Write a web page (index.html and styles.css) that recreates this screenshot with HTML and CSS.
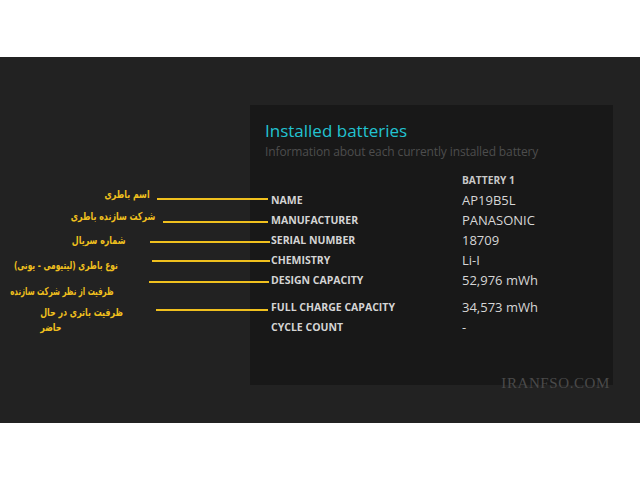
FILE: index.html
```html
<!DOCTYPE html>
<html lang="en">
<head>
<meta charset="utf-8">
<title>Installed batteries</title>
<link rel="stylesheet" href="styles.css">
</head>
<body>
<div class="top"></div>
<div class="band">
  <div class="panel">
    <h1 class="title">Installed batteries</h1>
    <p class="subtitle">Information about each currently installed battery</p>
    <div class="table">
      <div class="cell head"></div><div class="cell head">BATTERY 1</div>
      <div class="cell label">NAME</div><div class="cell value">AP19B5L</div>
      <div class="cell label">MANUFACTURER</div><div class="cell value">PANASONIC</div>
      <div class="cell label">SERIAL NUMBER</div><div class="cell value">18709</div>
      <div class="cell label">CHEMISTRY</div><div class="cell value">Li-I</div>
      <div class="cell label">DESIGN CAPACITY</div><div class="cell value">52,976 mWh</div>
      <div class="cell label gap">FULL CHARGE CAPACITY</div><div class="cell value gap">34,573 mWh</div>
      <div class="cell label">CYCLE COUNT</div><div class="cell value">-</div>
    </div>
  </div>

  <div class="note n1" dir="rtl">اسم باطری</div>
  <div class="note n2" dir="rtl">شرکت سازنده باطری</div>
  <div class="note n3" dir="rtl">شماره سریال</div>
  <div class="note n4" dir="rtl">نوع باطری (لیتیومی - یونی)</div>
  <div class="note n5" dir="rtl">ظرفیت از نظر شرکت سازنده</div>
  <div class="note n6" dir="rtl">ظرفیت باتری در حال</div>
  <div class="note n7" dir="rtl">حاضر</div>

  <div class="line l1"></div>
  <div class="line l2"></div>
  <div class="line l3"></div>
  <div class="line l4"></div>
  <div class="line l5"></div>
  <div class="line l6"></div>

  <div class="watermark">IRANFSO.COM</div>
</div>
<div class="bottom"></div>
</body>
</html>
```
FILE: styles.css
```css
html, body {
  margin: 0;
  padding: 0;
  background: #ffffff;
}
body {
  width: 640px;
  height: 480px;
  overflow: hidden;
  font-family: "Open Sans", "DejaVu Sans", sans-serif;
}
.top {
  height: 57px;
}
.band {
  position: relative;
  height: 366px;
  background: #222222;
  padding: 48px 0 0 250px;
  box-sizing: border-box;
}
.panel {
  width: 363px;
  height: 280px;
  background: #181818;
  box-sizing: border-box;
  padding: 16px 0 0 15px;
}
.title {
  margin: 0;
  font-size: 17px;
  font-weight: 400;
  line-height: 20px;
  color: #22c3d1;
}
.subtitle {
  margin: 2px 0 0;
  font-size: 12px;
  line-height: 18px;
  font-weight: 400;
  color: #4d4d4d;
  letter-spacing: -0.12px;
}
.table {
  display: grid;
  grid-template-columns: 191px auto;
  margin: 9px 0 0 6px;
}
.cell {
  height: 20px;
  line-height: 20px;
  white-space: nowrap;
}
.head {
  font-size: 10.2px;
  font-weight: 700;
  color: #c8c8c8;
}
.label {
  font-size: 10.5px;
  font-weight: 700;
  color: #d4d4d4;
}
.value {
  font-size: 13px;
  color: #d6d6d6;
}
.gap {
  padding-top: 7px;
}
.note {
  position: absolute;
  font-family: "DejaVu Sans", sans-serif;
  font-weight: 700;
  font-size: 11px;
  line-height: 14px;
  color: #f0c01e;
  white-space: nowrap;
  transform: scaleX(0.72);
  transform-origin: right center;
}
.n1 { top: 131px; right: 490px; }
.n2 { top: 153px; right: 485px; }
.n3 { top: 177px; right: 515px; }
.n4 { top: 202px; right: 522px; transform: scaleX(0.68); }
.n5 { top: 228px; right: 526px; transform: scaleX(0.64); }
.n6 { top: 249px; right: 517px; }
.n7 { top: 264px; right: 578px; }
.line {
  position: absolute;
  height: 2px;
  background: #f0c01e;
}
.l1 { top: 141px; left: 157px; width: 111px; }
.l2 { top: 164px; left: 163px; width: 105px; }
.l3 { top: 184px; left: 150px; width: 120px; }
.l4 { top: 203px; left: 152px; width: 118px; }
.l5 { top: 224px; left: 149px; width: 120px; }
.l6 { top: 252px; left: 156px; width: 112px; }
.watermark {
  position: absolute;
  top: 318px;
  right: 30px;
  font-family: "Liberation Serif", serif;
  font-size: 15px;
  letter-spacing: 0.6px;
  line-height: 16px;
  color: #4a4a4a;
}
.bottom {
  height: 57px;
}
```
